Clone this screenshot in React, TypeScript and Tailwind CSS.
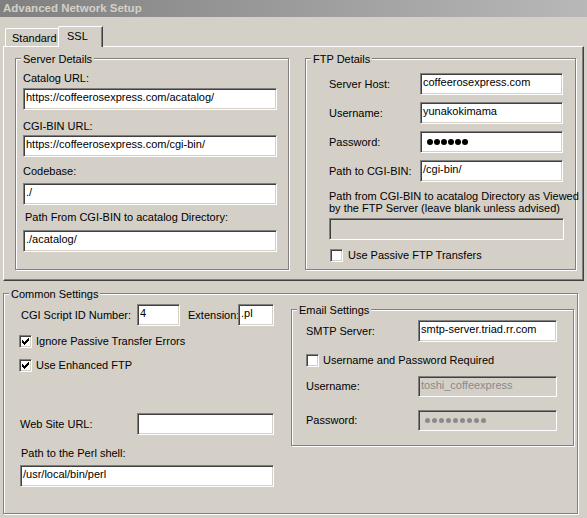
import React from "react";

const sunken =
  "border border-t-[#808080] border-l-[#808080] border-b-white border-r-white shadow-[inset_1px_1px_0_#404040,inset_-1px_-1px_0_#d4d0c8]";

function Field({
  value,
  className = "",
  disabled = false,
  center = false,
  children,
}: {
  value?: string;
  className?: string;
  disabled?: boolean;
  center?: boolean;
  children?: React.ReactNode;
}) {
  return (
    <div
      className={`${sunken} ${disabled ? "bg-[#d4d0c8] text-[#8a8a8a]" : "bg-white text-black"} ${center ? "flex items-center" : "flex items-start pt-[1.5px]"} pl-[2px] whitespace-nowrap overflow-hidden shrink-0 ${className}`}
    >
      {value}
      {children}
    </div>
  );
}

function Group({
  title,
  className = "",
  children,
}: {
  title: string;
  className?: string;
  children?: React.ReactNode;
}) {
  return (
    <div
      className={`relative border border-[#808080] shadow-[inset_1px_1px_0_#fff,1px_1px_0_#fff] shrink-0 ${className}`}
    >
      <span className="absolute -top-[6px] left-[5px] px-[2px] bg-[#d4d0c8] leading-[13px] whitespace-nowrap">
        {title}
      </span>
      {children}
    </div>
  );
}

function Check({ checked = false }: { checked?: boolean }) {
  return (
    <div
      className={`w-[13px] h-[13px] ${sunken} bg-white flex items-center justify-center shrink-0`}
    >
      {checked && (
        <svg width="7" height="7" viewBox="0 0 7 7" shapeRendering="crispEdges">
          <path
            d="M6 0h1v3h-1v1h-1v1h-1v1h-1v1h-1v-1h-1v-1h-1v-3h1v1h1v1h1v-1h1v-1h1z"
            fill="#000"
          />
        </svg>
      )}
    </div>
  );
}

function Dots({ n, color, size }: { n: number; color: string; size: string }) {
  return (
    <div className="flex items-center gap-[1px]">
      {Array.from({ length: n }).map((_, i) => (
        <span key={i} className={`${size} rounded-full ${color}`} />
      ))}
    </div>
  );
}

export default function App() {
  return (
    <div className="w-[587px] h-[518px] overflow-hidden bg-[#d4d0c8] text-[11px] leading-[13px] text-black font-['Liberation_Sans',Arial,sans-serif]">
      {/* Title bar */}
      <div className="h-[17px] bg-linear-to-r from-[#808080] to-[#b8b8b8] flex items-center pl-[3px] font-bold text-[11.5px] text-[#d4d0c8]">
        Advanced Network Setup
      </div>

      {/* Tabs */}
      <div className="mt-[9px] flex items-end h-[20px] pl-[5px] relative z-10">
        <div className="h-[18px] w-[55px] border-t border-l border-white rounded-tl-[2px] pl-[6px] pt-[3px]">
          Standard
        </div>
        <div className="relative h-[21px] w-[45px] -ml-[2px] -mb-[1px] bg-[#d4d0c8] border-t border-l border-white border-r border-r-[#404040] shadow-[inset_-1px_0_0_#808080] rounded-tl-[2px] pl-[8px] pt-[3px]">
          SSL
        </div>
      </div>

      {/* Tab panel */}
      <div className="mx-[3px] h-[235px] border-t border-l border-white border-r border-b border-r-[#404040] border-b-[#404040] shadow-[inset_-1px_-1px_0_#808080] flex items-start pt-[11px] pl-[11px]">
        <Group title="Server Details" className="w-[274px] h-[212px] pl-[7px] pt-[13px]">
          <div className="flex flex-col items-start">
            <div>Catalog URL:</div>
            <Field value="https://coffeerosexpress.com/acatalog/" className="mt-[3px] w-[254px] h-[22px]" />
            <div className="mt-[10px]">CGI-BIN URL:</div>
            <Field value="https://coffeerosexpress.com/cgi-bin/" className="mt-[2px] w-[254px] h-[22px]" />
            <div className="mt-[8px]">Codebase:</div>
            <Field value="./" className="mt-[5px] w-[254px] h-[22px]" />
            <div className="mt-[6px] ml-[2px]">Path From CGI-BIN to acatalog Directory:</div>
            <Field value="./acatalog/" className="mt-[6px] w-[254px] h-[22px]" />
          </div>
        </Group>

        <Group title="FTP Details" className="ml-[16px] w-[271px] h-[212px] pl-[23px] pt-[14px]">
          <div className="flex flex-col items-start gap-[7px]">
            <div className="flex items-center h-[22px]">
              <div className="w-[91px]">Server Host:</div>
              <Field value="coffeerosexpress.com" className="w-[143px] h-[22px]" />
            </div>
            <div className="flex items-center h-[22px]">
              <div className="w-[91px]">Username:</div>
              <Field value="yunakokimama" className="w-[143px] h-[22px]" />
            </div>
            <div className="flex items-center h-[22px]">
              <div className="w-[91px]">Password:</div>
              <Field center className="w-[143px] h-[22px]">
                <div className="ml-[4px]">
                  <Dots n={6} color="bg-black" size="w-[6px] h-[6px]" />
                </div>
              </Field>
            </div>
            <div className="flex items-center h-[22px]">
              <div className="w-[91px]">Path to CGI-BIN:</div>
              <Field value="/cgi-bin/" className="w-[143px] h-[22px]" />
            </div>
          </div>
          <div className="mt-[8px] leading-[12px] whitespace-nowrap">
            Path from CGI-BIN to acatalog Directory as Viewed
            <br />
            by the FTP Server (leave blank unless advised)
          </div>
          <Field disabled className="mt-[4px] w-[235px] h-[22px]" />
          <div className="mt-[9px] flex items-center gap-[5px] ml-[1px]">
            <Check />
            <span>Use Passive FTP Transfers</span>
          </div>
        </Group>
      </div>

      {/* Common settings */}
      <Group title="Common Settings" className="mt-[12px] ml-[3px] w-[575px] h-[221px] flex items-start">
        <div className="w-[287px] pl-[16px] pt-[10px] flex flex-col items-start shrink-0">
          <div className="flex items-center h-[22px]">
            <div className="w-[116px] ml-[1px]">CGI Script ID Number:</div>
            <Field value="4" className="w-[43px] h-[22px]" />
            <div className="ml-[8px] w-[50px]">Extension:</div>
            <Field value=".pl" className="w-[36px] h-[22px]" />
          </div>
          <div className="mt-[9px] flex items-center gap-[4px] -ml-[1px]">
            <Check checked />
            <span>Ignore Passive Transfer Errors</span>
          </div>
          <div className="mt-[11px] flex items-center gap-[4px] -ml-[1px]">
            <Check checked />
            <span>Use Enhanced FTP</span>
          </div>
          <div className="mt-[41px] flex items-center h-[22px]">
            <div className="w-[117px] ml-[0px]">Web Site URL:</div>
            <Field className="w-[137px] h-[22px]" />
          </div>
          <div className="mt-[12px] ml-[1px]">Path to the Perl shell:</div>
          <Field value="/usr/local/bin/perl" className="mt-[5px] w-[254px] h-[22px]" />
        </div>

        <Group title="Email Settings" className="mt-[15px] w-[283px] h-[137px] pl-[14px] pt-[10px]">
          <div className="flex items-center h-[22px]">
            <div className="w-[112px]">SMTP Server:</div>
            <Field value="smtp-server.triad.rr.com" className="w-[139px] h-[22px]" />
          </div>
          <div className="mt-[12px] flex items-center gap-[4px]">
            <Check />
            <span>Username and Password Required</span>
          </div>
          <div className="mt-[9px] flex items-center h-[21px]">
            <div className="w-[112px]">Username:</div>
            <Field disabled value="toshi_coffeexpress" className="w-[139px] h-[21px]" />
          </div>
          <div className="mt-[13px] flex items-center h-[21px]">
            <div className="w-[112px]">Password:</div>
            <Field disabled center className="w-[139px] h-[21px]">
              <div className="ml-[4px] flex items-center gap-[2px]">
                {Array.from({ length: 9 }).map((_, i) => (
                  <span key={i} className="w-[5px] h-[5px] rounded-full bg-[#8a8a8a]" />
                ))}
              </div>
            </Field>
          </div>
        </Group>
      </Group>
    </div>
  );
}
